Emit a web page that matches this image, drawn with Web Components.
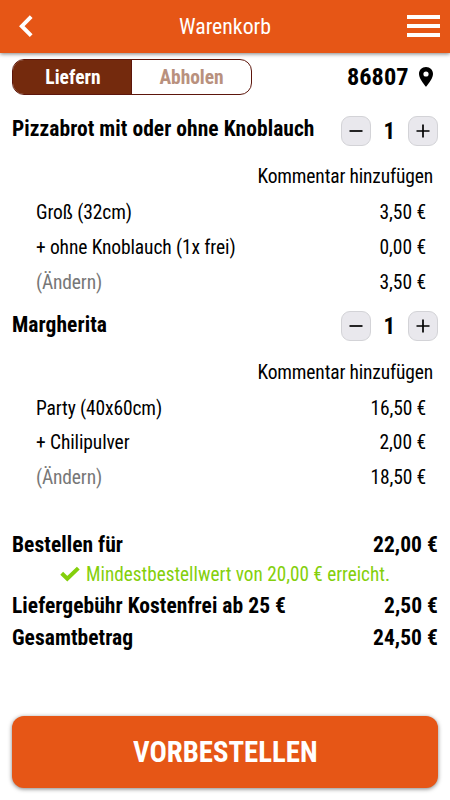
<!DOCTYPE html>
<html lang="de">
<head>
<meta charset="utf-8">
<title>Warenkorb</title>
<style>
html,body{margin:0;height:100%;background:#fff}
body{font-family:"Roboto Condensed",Roboto,"Liberation Sans",sans-serif;font-stretch:75%;color:#000;overflow:hidden}
</style>
</head>
<body>
<cart-page></cart-page>
<script>
const define = (name, html, setup) => customElements.define(name, class extends HTMLElement {
  connectedCallback() {
    if (this.shadowRoot) return;
    this.attachShadow({mode: 'open'}).innerHTML = html;
    if (setup) setup(this, this.shadowRoot);
  }
});

// Condensed single-line label with a fixed advance width.
define('fit-text', `<style>
:host{display:block;flex:none;line-height:1.2;white-space:nowrap;padding-top:1px}
span{display:inline-block;transform-origin:0 50%}
</style><span><slot></slot></span>`, (el, root) => {
  const w = +el.getAttribute('w'), span = root.querySelector('span');
  el.style.width = w + 'px';
  const natural = span.getBoundingClientRect().width;
  const gap = (w - natural) / el.textContent.length;
  if (Math.abs(gap) < 2.5) span.style.letterSpacing = gap + 'px';
  else span.style.transform = `scaleX(${w / natural})`;
});

define('app-header', `<style>
:host{display:flex;flex:none;box-sizing:border-box;height:53px;padding:0 10px 1px 19px;align-items:center;justify-content:space-between;background:#e65616;color:#fff;font-size:21.5px;box-shadow:0 1px 4px rgba(0,0,0,.5);position:relative}
svg{display:block}.l{width:24px}.r{width:33px}
</style>
<div class="l"><svg width="15" height="24" viewBox="0 0 15 24"><path d="M12.200 2.700 2.800 12.200l9.400 9.500" fill="none" stroke="#fff" stroke-width="3.900"/></svg></div>
<fit-text w="92"><slot></slot></fit-text>
<div class="r"><svg width="33" height="24" viewBox="0 0 33 24"><path d="M0 3h33M0 12h33M0 21h33" stroke="#fff" stroke-width="4"/></svg></div>`);

define('mode-switch', `<style>
:host{display:flex;box-sizing:border-box;width:240px;height:36px;border:1px solid #5d160c;border-radius:12px;overflow:hidden;font-size:19.5px;font-weight:700}
div{box-sizing:border-box;display:flex;align-items:center;justify-content:center;padding-top:1px}
.on{width:119px;background:#742a0d;color:#fff;border-right:1px solid #5d160c;padding-left:2px}.off{flex:1;color:#b9917e}
</style><div class="on"><fit-text w="55.500">Liefern</fit-text></div><div class="off"><fit-text w="64">Abholen</fit-text></div>`);

define('post-code', `<style>
:host{display:flex;align-items:center;gap:10px;font-size:24px;font-weight:700}svg{display:block}
</style><fit-text w="61.500"><slot></slot></fit-text><svg width="16" height="20" viewBox="0 0 16 20"><path fill-rule="evenodd" d="M8 0C3.900 0 1 3 1 7c0 5.200 7 12.800 7 12.800S15 12.200 15 7c0-4-2.900-7-7-7zm0 4.400a2.600 2.600 0 1 1 0 5.200 2.600 2.600 0 0 1 0-5.200z"/></svg>`);

define('qty-stepper', `<style>
:host{display:flex;width:97px;align-items:center;justify-content:space-between;font-size:23px;font-weight:700}
b{box-sizing:border-box;width:30px;height:30px;border:1px solid #d3d3d7;border-radius:9px;background:#e9e8ed;display:flex}
svg{display:block;width:28px;height:28px}path{stroke:#000;stroke-width:1.700}
</style><b><svg viewBox="0 0 28 28"><path d="M7.500 14h13"/></svg></b><fit-text w="12">1</fit-text><b><svg viewBox="0 0 28 28"><path d="M7.500 14h13M14 7.500v13"/></svg></b>`);

define('price-row', `<style>
:host{display:flex;justify-content:space-between;align-items:center;height:34.900px;padding:0 24px 0 36px;font-size:19.500px}
:host([muted]) ::slotted(:first-child){color:#777}
</style><slot></slot>`);

define('cart-item', `<style>
:host{display:block;height:195.400px}
.head{display:flex;justify-content:space-between;align-items:center;height:30px;padding:0 12px}
.name{font-size:21.500px;font-weight:700;padding-bottom:5px}
.note{display:flex;justify-content:flex-end;align-items:center;height:30px;padding:0 17px 0 0;margin:15.500px 0 3.400px;font-size:19.500px}
</style><div class="head"><div class="name"><slot name="name"></slot></div><qty-stepper></qty-stepper></div>
<div class="note"><fit-text w="175.500">Kommentar hinzufügen</fit-text></div><slot></slot>`);

define('total-row', `<style>
:host{display:flex;justify-content:space-between;align-items:center;height:32px;padding:0 12px;font-size:21.500px;font-weight:700}
</style><slot></slot>`);

define('min-order', `<style>
:host{display:flex;align-items:center;justify-content:center;gap:6px;height:28px;padding-bottom:1px;color:#84cf0b;font-size:19.500px}svg{display:block}
</style><svg width="20" height="16" viewBox="0 0 20 16"><path d="m1.700 7.300 5.600 5.500L18.300 2.100" fill="none" stroke="#84cf0b" stroke-width="4"/></svg><fit-text w="304"><slot></slot></fit-text>`);

define('order-button', `<style>
:host{display:flex;align-items:center;justify-content:center;flex:none;height:72px;margin:auto 12px 12px;border-radius:12px;background:#e65616;color:#fff;font-size:29.500px;font-weight:700;box-shadow:0 1px 4px rgba(0,0,0,.5)}
</style><fit-text w="184.500"><slot></slot></fit-text>`);

define('cart-page', `<style>
:host{display:flex;flex-direction:column;width:450px;height:800px}
.bar{display:flex;justify-content:space-between;align-items:center;padding:6px 16px 0 12px;height:36px}
.items{margin-top:21px}.totals{margin-top:21.500px}
</style>
<app-header>Warenkorb</app-header>
<div class="bar"><mode-switch></mode-switch><post-code>86807</post-code></div>
<div class="items">
<cart-item><fit-text slot="name" w="302.500">Pizzabrot mit oder ohne Knoblauch</fit-text>
<price-row><fit-text w="96">Groß (32cm)</fit-text><fit-text w="46.500">3,50 €</fit-text></price-row>
<price-row><fit-text w="199.500">+ ohne Knoblauch (1x frei)</fit-text><fit-text w="46.500">0,00 €</fit-text></price-row>
<price-row muted><fit-text w="66">(Ändern)</fit-text><fit-text w="46.500">3,50 €</fit-text></price-row></cart-item>
<cart-item><fit-text slot="name" w="95">Margherita</fit-text>
<price-row><fit-text w="126">Party (40x60cm)</fit-text><fit-text w="55.500">16,50 €</fit-text></price-row>
<price-row><fit-text w="93.500">+ Chilipulver</fit-text><fit-text w="46.500">2,00 €</fit-text></price-row>
<price-row muted><fit-text w="66">(Ändern)</fit-text><fit-text w="55.500">18,50 €</fit-text></price-row></cart-item>
</div>
<div class="totals">
<total-row><fit-text w="111">Bestellen für</fit-text><fit-text w="65">22,00 €</fit-text></total-row>
<min-order>Mindestbestellwert von 20,00 € erreicht.</min-order>
<total-row><fit-text w="274">Liefergebühr Kostenfrei ab 25 €</fit-text><fit-text w="54">2,50 €</fit-text></total-row>
<total-row><fit-text w="121">Gesamtbetrag</fit-text><fit-text w="65">24,50 €</fit-text></total-row>
</div>
<order-button>VORBESTELLEN</order-button>`);
</script>
</body>
</html>
